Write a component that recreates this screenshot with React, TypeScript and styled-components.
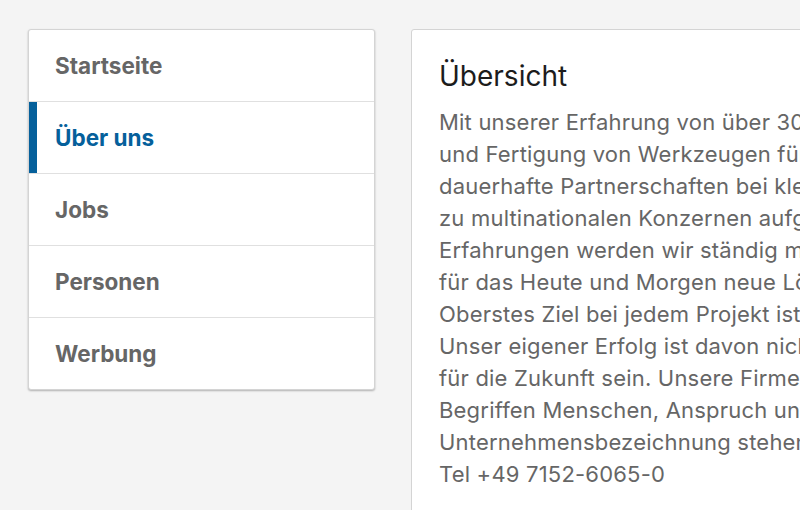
import React from 'react';
import styled, { createGlobalStyle } from 'styled-components';

const GlobalStyle = createGlobalStyle`
  *, *::before, *::after {
    box-sizing: border-box;
  }
  html, body {
    margin: 0;
    padding: 0;
    background: #f4f4f4;
    font-family: Inter, "Noto Sans", sans-serif;
    -webkit-font-smoothing: antialiased;
  }
`;

const Page = styled.div`
  display: flex;
  align-items: flex-start;
  gap: 36px;
  padding: 29px 0 0 28px;
  width: 800px;
  height: 510px;
  overflow: hidden;
`;

const Nav = styled.nav`
  flex: 0 0 347px;
  background: #fff;
  border: 1px solid #d4d4d4;
  border-radius: 3px;
  box-shadow: 0 1px 2px rgba(0, 0, 0, 0.28);
  overflow: hidden;
`;

const NavItem = styled.a<{ $active?: boolean }>`
  display: flex;
  align-items: center;
  height: 72px;
  padding-left: 26px;
  border-bottom: 1px solid #e0e0e0;
  box-shadow: ${(p) => (p.$active ? 'inset 8px 0 0 #05609b' : 'none')};
  font-size: 22.5px;
  font-weight: 700;
  color: ${(p) => (p.$active ? '#05609b' : '#666')};
  text-decoration: none;
  &:last-child {
    border-bottom: none;
    height: 71px;
  }
`;

const Content = styled.section`
  flex: 0 0 640px;
  height: 520px;
  background: #fff;
  border: 1px solid #d4d4d4;
  border-radius: 3px;
  padding: 29px 0 0 27px;
  overflow: hidden;
`;

const Title = styled.h1`
  margin: 0 0 13px;
  font-size: 28px;
  font-weight: 400;
  line-height: 34px;
  color: #1c1c1c;
`;

const Body = styled.p`
  margin: 0;
  font-size: 22px;
  letter-spacing: 0.2px;
  line-height: 32px;
  color: #666;
  white-space: nowrap;
`;

const items = ['Startseite', 'Über uns', 'Jobs', 'Personen', 'Werbung'];

const lines = [
  'Mit unserer Erfahrung von über 30 Jahren in der Entwicklung',
  'und Fertigung von Werkzeugen für die Industrie haben wir',
  'dauerhafte Partnerschaften bei kleinen Unternehmen bis hin',
  'zu multinationalen Konzernen aufgebaut. Mit diesen',
  'Erfahrungen werden wir ständig motiviert, unseren Kunden',
  'für das Heute und Morgen neue Lösungen zu bieten.',
  'Oberstes Ziel bei jedem Projekt ist die Zufriedenheit.',
  'Unser eigener Erfolg ist davon nicht zu trennen und soll',
  'für die Zukunft sein. Unsere Firmenphilosophie ist in den',
  'Begriffen Menschen, Anspruch und Qualität verankert.',
  'Unternehmensbezeichnung stehen Menschen mit Leidenschaft.',
  'Tel +49 7152-6065-0',
];

export default function App() {
  return (
    <>
      <GlobalStyle />
      <Page>
        <Nav>
          {items.map((item) => (
            <NavItem key={item} href="#" $active={item === 'Über uns'}>
              {item}
            </NavItem>
          ))}
        </Nav>
        <Content>
          <Title>Übersicht</Title>
          <Body>
            {lines.map((line, i) => (
              <React.Fragment key={i}>
                {line}
                {i < lines.length - 1 && <br />}
              </React.Fragment>
            ))}
          </Body>
        </Content>
      </Page>
    </>
  );
}
